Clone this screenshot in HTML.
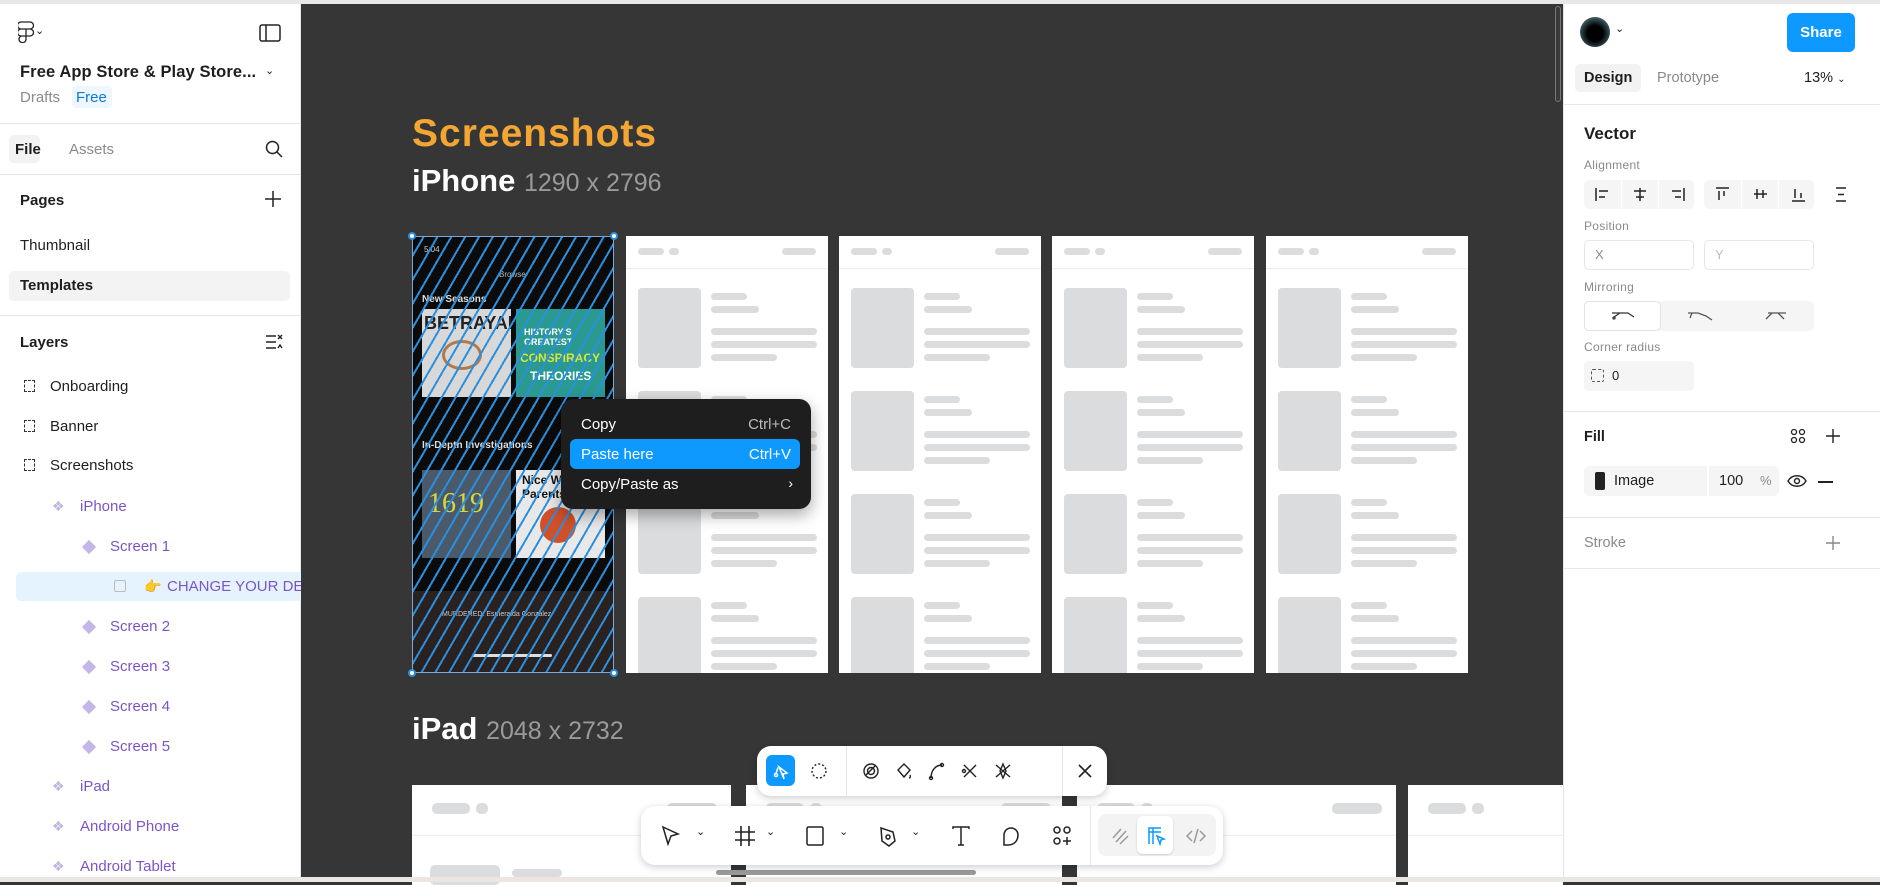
<!DOCTYPE html>
<html><head><meta charset="utf-8"><style>
*{box-sizing:border-box;margin:0;padding:0}
body{width:1880px;height:882px;overflow:hidden;font-family:"Liberation Sans",sans-serif;background:#363636;position:relative}
.abs{position:absolute}
#left{left:0;top:0;width:301px;height:882px;background:#fff;border-right:1px solid #e6e6e6}
#right{left:1563px;top:0;width:317px;height:882px;background:#fff;border-left:1px solid #e6e6e6}
.t{position:absolute;font-size:15px;color:#1e1e1e;white-space:nowrap}
.g{color:#8a8a8a}
.p{color:#7b55c7}
.hr{position:absolute;height:1px;background:#e6e6e6}
.frame{position:absolute;background:#fff;width:202px;height:437px;overflow:hidden}
.frame i{position:absolute;background:#dadcdd;border-radius:4px;display:block}
.ipad{position:absolute;background:#fff;top:785px;height:100px;overflow:hidden}
.ipad i{position:absolute;background:#dadcdd;border-radius:5px;display:block}
.ctx{left:561px;top:399px;width:250px;height:110px;background:#1e1e1e;border-radius:12px;box-shadow:0 6px 16px rgba(0,0,0,.35)}
.ctx .t{color:#fff;font-size:15px}
.bar{background:#fff;border-radius:14px;box-shadow:0 2px 8px rgba(0,0,0,.2)}
.ic{position:absolute}
.btn{position:absolute;background:#f5f5f5;border-radius:5px}
.lbl{position:absolute;font-size:12px;color:#8a8a8a;letter-spacing:.3px}
</style></head><body>
<div class="abs" style="left:0;top:0;width:1880px;height:4px;background:#e8e8e8;z-index:5"></div>
<div class="abs" style="left:0;top:877px;width:1880px;height:5px;background:#ece6e2;z-index:5"></div>

<div class="abs" style="left:412px;top:112px;font-size:39px;font-weight:bold;color:#f4a632;letter-spacing:1px">Screenshots</div>
<div class="abs" style="left:412px;top:163px;font-size:31px;font-weight:bold;color:#fff">iPhone <span style="font-weight:normal;color:#9a9a9a;font-size:25px">1290 x 2796</span></div>
<div class="abs" style="left:412px;top:711px;font-size:31px;font-weight:bold;color:#fff">iPad <span style="font-weight:normal;color:#9a9a9a;font-size:25px">2048 x 2732</span></div>

<!-- phone screenshot -->
<div class="abs" style="left:412px;top:236px;width:202px;height:437px;background:#0b0b0b;overflow:hidden">
 <div class="abs" style="left:12px;top:9px;color:#ccc;font-size:8px">5:04</div>
 <div class="abs" style="left:87px;top:34px;color:#bbb;font-size:8px">Browse</div>
 <div class="abs" style="left:10px;top:58px;color:#ddd;font-size:10px;font-weight:bold">New Seasons</div>
 <div class="abs" style="left:10px;top:73px;width:89px;height:88px;background:#d8d8d8;overflow:hidden"><div style="font:bold 18px 'Liberation Sans';color:#222;margin:4px 2px">BETRAYAL</div><div style="margin:6px 20px;width:40px;height:30px;border:3px solid #b07a50;border-radius:50%"></div></div>
 <div class="abs" style="left:104px;top:73px;width:89px;height:88px;background:#2a9a90;overflow:hidden"><div style="color:#fff;font:bold 9px 'Liberation Sans';margin:18px 8px 0">HISTORY'S GREATEST</div><div style="color:#d8e53a;font:bold 12px 'Liberation Sans';margin:4px 4px">CONSPIRACY</div><div style="color:#fff;font:bold 12px 'Liberation Sans';margin:0 14px">THEORIES</div></div>
 <div class="abs" style="left:10px;top:204px;color:#ddd;font-size:10px;font-weight:bold">In-Depth Investigations</div>
 <div class="abs" style="left:10px;top:234px;width:89px;height:88px;background:#4a5a6a"><div style="color:#d8d83a;font:28px 'Liberation Serif';margin:18px 6px">1619</div></div>
 <div class="abs" style="left:104px;top:234px;width:89px;height:88px;background:#e8e8e8;overflow:hidden"><div style="color:#111;font:bold 12px 'Liberation Sans';margin:3px 6px">Nice White Parents</div><div style="margin:6px 24px;width:36px;height:36px;background:#d0502a;border-radius:50%"></div></div>
 <div class="abs" style="left:0;top:355px;width:202px;height:82px;background:#2a2220"></div>
 <div class="abs" style="left:30px;top:375px;color:#ccc;font-size:7px">MURDERED: Esmeralda Gonzalez</div>
 <div class="abs" style="left:60px;top:418px;width:80px;height:3px;background:#ddd;border-radius:2px"></div>
 <div class="abs" style="inset:0;background:repeating-linear-gradient(-60deg,transparent 0 10px,#2b8fe0 10px 12px)"></div>
 <div class="abs" style="inset:0;border:1px solid #7aa8d8"></div>
</div>
<div class="abs" style="left:408px;top:232px;width:8px;height:8px;border-radius:50%;background:#fff;border:2px solid #2b8fe0"></div>
<div class="abs" style="left:610px;top:232px;width:8px;height:8px;border-radius:50%;background:#fff;border:2px solid #2b8fe0"></div>
<div class="abs" style="left:408px;top:669px;width:8px;height:8px;border-radius:50%;background:#fff;border:2px solid #2b8fe0"></div>
<div class="abs" style="left:610px;top:669px;width:8px;height:8px;border-radius:50%;background:#fff;border:2px solid #2b8fe0"></div>

<!-- skeleton frames -->
<div class="frame" style="left:626px;top:236px">
<i style="left:12px;top:12px;width:26px;height:7px"></i><i style="left:43px;top:12px;width:10px;height:7px"></i><i style="left:156px;top:12px;width:34px;height:7px"></i><div style="position:absolute;left:0;top:32px;width:202px;height:1px;background:#eee"></div>
<i style="left:12px;top:52px;width:63px;height:80px"></i><i style="left:85px;top:57px;width:36px;height:7px"></i><i style="left:85px;top:70px;width:48px;height:7px"></i><i style="left:85px;top:92px;width:106px;height:7px"></i><i style="left:85px;top:105px;width:106px;height:7px"></i><i style="left:85px;top:118px;width:66px;height:7px"></i>
<i style="left:12px;top:155px;width:63px;height:80px"></i><i style="left:85px;top:160px;width:36px;height:7px"></i><i style="left:85px;top:173px;width:48px;height:7px"></i><i style="left:85px;top:195px;width:106px;height:7px"></i><i style="left:85px;top:208px;width:106px;height:7px"></i><i style="left:85px;top:221px;width:66px;height:7px"></i>
<i style="left:12px;top:258px;width:63px;height:80px"></i><i style="left:85px;top:263px;width:36px;height:7px"></i><i style="left:85px;top:276px;width:48px;height:7px"></i><i style="left:85px;top:298px;width:106px;height:7px"></i><i style="left:85px;top:311px;width:106px;height:7px"></i><i style="left:85px;top:324px;width:66px;height:7px"></i>
<i style="left:12px;top:361px;width:63px;height:80px"></i><i style="left:85px;top:366px;width:36px;height:7px"></i><i style="left:85px;top:379px;width:48px;height:7px"></i><i style="left:85px;top:401px;width:106px;height:7px"></i><i style="left:85px;top:414px;width:106px;height:7px"></i><i style="left:85px;top:427px;width:66px;height:7px"></i>
</div>
<div class="frame" style="left:839px;top:236px">
<i style="left:12px;top:12px;width:26px;height:7px"></i><i style="left:43px;top:12px;width:10px;height:7px"></i><i style="left:156px;top:12px;width:34px;height:7px"></i><div style="position:absolute;left:0;top:32px;width:202px;height:1px;background:#eee"></div>
<i style="left:12px;top:52px;width:63px;height:80px"></i><i style="left:85px;top:57px;width:36px;height:7px"></i><i style="left:85px;top:70px;width:48px;height:7px"></i><i style="left:85px;top:92px;width:106px;height:7px"></i><i style="left:85px;top:105px;width:106px;height:7px"></i><i style="left:85px;top:118px;width:66px;height:7px"></i>
<i style="left:12px;top:155px;width:63px;height:80px"></i><i style="left:85px;top:160px;width:36px;height:7px"></i><i style="left:85px;top:173px;width:48px;height:7px"></i><i style="left:85px;top:195px;width:106px;height:7px"></i><i style="left:85px;top:208px;width:106px;height:7px"></i><i style="left:85px;top:221px;width:66px;height:7px"></i>
<i style="left:12px;top:258px;width:63px;height:80px"></i><i style="left:85px;top:263px;width:36px;height:7px"></i><i style="left:85px;top:276px;width:48px;height:7px"></i><i style="left:85px;top:298px;width:106px;height:7px"></i><i style="left:85px;top:311px;width:106px;height:7px"></i><i style="left:85px;top:324px;width:66px;height:7px"></i>
<i style="left:12px;top:361px;width:63px;height:80px"></i><i style="left:85px;top:366px;width:36px;height:7px"></i><i style="left:85px;top:379px;width:48px;height:7px"></i><i style="left:85px;top:401px;width:106px;height:7px"></i><i style="left:85px;top:414px;width:106px;height:7px"></i><i style="left:85px;top:427px;width:66px;height:7px"></i>
</div>
<div class="frame" style="left:1052px;top:236px">
<i style="left:12px;top:12px;width:26px;height:7px"></i><i style="left:43px;top:12px;width:10px;height:7px"></i><i style="left:156px;top:12px;width:34px;height:7px"></i><div style="position:absolute;left:0;top:32px;width:202px;height:1px;background:#eee"></div>
<i style="left:12px;top:52px;width:63px;height:80px"></i><i style="left:85px;top:57px;width:36px;height:7px"></i><i style="left:85px;top:70px;width:48px;height:7px"></i><i style="left:85px;top:92px;width:106px;height:7px"></i><i style="left:85px;top:105px;width:106px;height:7px"></i><i style="left:85px;top:118px;width:66px;height:7px"></i>
<i style="left:12px;top:155px;width:63px;height:80px"></i><i style="left:85px;top:160px;width:36px;height:7px"></i><i style="left:85px;top:173px;width:48px;height:7px"></i><i style="left:85px;top:195px;width:106px;height:7px"></i><i style="left:85px;top:208px;width:106px;height:7px"></i><i style="left:85px;top:221px;width:66px;height:7px"></i>
<i style="left:12px;top:258px;width:63px;height:80px"></i><i style="left:85px;top:263px;width:36px;height:7px"></i><i style="left:85px;top:276px;width:48px;height:7px"></i><i style="left:85px;top:298px;width:106px;height:7px"></i><i style="left:85px;top:311px;width:106px;height:7px"></i><i style="left:85px;top:324px;width:66px;height:7px"></i>
<i style="left:12px;top:361px;width:63px;height:80px"></i><i style="left:85px;top:366px;width:36px;height:7px"></i><i style="left:85px;top:379px;width:48px;height:7px"></i><i style="left:85px;top:401px;width:106px;height:7px"></i><i style="left:85px;top:414px;width:106px;height:7px"></i><i style="left:85px;top:427px;width:66px;height:7px"></i>
</div>
<div class="frame" style="left:1266px;top:236px">
<i style="left:12px;top:12px;width:26px;height:7px"></i><i style="left:43px;top:12px;width:10px;height:7px"></i><i style="left:156px;top:12px;width:34px;height:7px"></i><div style="position:absolute;left:0;top:32px;width:202px;height:1px;background:#eee"></div>
<i style="left:12px;top:52px;width:63px;height:80px"></i><i style="left:85px;top:57px;width:36px;height:7px"></i><i style="left:85px;top:70px;width:48px;height:7px"></i><i style="left:85px;top:92px;width:106px;height:7px"></i><i style="left:85px;top:105px;width:106px;height:7px"></i><i style="left:85px;top:118px;width:66px;height:7px"></i>
<i style="left:12px;top:155px;width:63px;height:80px"></i><i style="left:85px;top:160px;width:36px;height:7px"></i><i style="left:85px;top:173px;width:48px;height:7px"></i><i style="left:85px;top:195px;width:106px;height:7px"></i><i style="left:85px;top:208px;width:106px;height:7px"></i><i style="left:85px;top:221px;width:66px;height:7px"></i>
<i style="left:12px;top:258px;width:63px;height:80px"></i><i style="left:85px;top:263px;width:36px;height:7px"></i><i style="left:85px;top:276px;width:48px;height:7px"></i><i style="left:85px;top:298px;width:106px;height:7px"></i><i style="left:85px;top:311px;width:106px;height:7px"></i><i style="left:85px;top:324px;width:66px;height:7px"></i>
<i style="left:12px;top:361px;width:63px;height:80px"></i><i style="left:85px;top:366px;width:36px;height:7px"></i><i style="left:85px;top:379px;width:48px;height:7px"></i><i style="left:85px;top:401px;width:106px;height:7px"></i><i style="left:85px;top:414px;width:106px;height:7px"></i><i style="left:85px;top:427px;width:66px;height:7px"></i>
</div>

<!-- ipad frames -->
<div class="ipad" style="left:412px;width:319px"><i style="left:20px;top:18px;width:38px;height:11px"></i><i style="left:64px;top:18px;width:12px;height:11px"></i><i style="left:255px;top:18px;width:50px;height:11px"></i><div style="position:absolute;left:0;top:50px;width:319px;height:1px;background:#eee"></div><i style="left:18px;top:80px;width:70px;height:20px"></i><i style="left:100px;top:84px;width:50px;height:8px"></i></div>
<div class="ipad" style="left:746px;width:316px"><i style="left:20px;top:18px;width:38px;height:11px"></i><i style="left:64px;top:18px;width:12px;height:11px"></i><i style="left:255px;top:18px;width:50px;height:11px"></i><div style="position:absolute;left:0;top:50px;width:316px;height:1px;background:#eee"></div></div>
<div class="ipad" style="left:1077px;width:319px"><i style="left:20px;top:18px;width:38px;height:11px"></i><i style="left:64px;top:18px;width:12px;height:11px"></i><i style="left:255px;top:18px;width:50px;height:11px"></i><div style="position:absolute;left:0;top:50px;width:319px;height:1px;background:#eee"></div></div>
<div class="ipad" style="left:1408px;width:155px"><i style="left:20px;top:18px;width:38px;height:11px"></i><i style="left:64px;top:18px;width:12px;height:11px"></i><div style="position:absolute;left:0;top:50px;width:155px;height:1px;background:#eee"></div></div>
<div class="abs" style="left:716px;top:870px;width:260px;height:5px;border-radius:3px;background:#9a9a9a"></div>
<div class="abs" style="left:1555px;top:6px;width:6px;height:96px;border-radius:3px;border:1px solid #777;background:#3a3a3a"></div>

<!-- context menu -->
<div class="abs ctx">
 <div class="t" style="left:20px;top:17px">Copy</div><div class="t" style="right:20px;top:17px;color:#bbb">Ctrl+C</div>
 <div class="abs" style="left:9px;top:40px;width:230px;height:30px;background:#0d99ff;border-radius:6px"></div>
 <div class="t" style="left:20px;top:47px">Paste here</div><div class="t" style="right:20px;top:47px">Ctrl+V</div>
 <div class="t" style="left:20px;top:77px">Copy/Paste as</div><div class="t" style="right:18px;top:76px;font-size:14px">›</div>
</div>

<!-- floating vector toolbar -->
<div class="abs bar" style="left:757px;top:746px;width:350px;height:50px">
 <div class="abs" style="left:9px;top:9px;width:29px;height:31px;background:#0d99ff;border-radius:6px"></div>
 <svg class="ic" style="left:14px;top:15px" width="20" height="20" viewBox="0 0 20 20" fill="none" stroke="#fff" stroke-width="1.5"><path d="M8 6l8 6-4 1 1 5-5-12z"/><circle cx="5" cy="14" r="1.5"/><path d="M5 12.5l2-6"/></svg>
 <svg class="ic" style="left:52px;top:15px" width="20" height="20" viewBox="0 0 20 20" fill="none" stroke="#222" stroke-width="1.4" stroke-dasharray="2 2"><circle cx="10" cy="10" r="7"/></svg>
 <div class="abs" style="left:89px;top:0;width:1px;height:50px;background:#e6e6e6"></div>
 <svg class="ic" style="left:104px;top:15px" width="20" height="20" viewBox="0 0 20 20" fill="none" stroke="#222" stroke-width="1.4"><circle cx="10" cy="10" r="7"/><circle cx="10" cy="10" r="3.5"/><path d="M5 14l9-9"/></svg>
 <svg class="ic" style="left:137px;top:15px" width="20" height="20" viewBox="0 0 20 20" fill="none" stroke="#222" stroke-width="1.4"><path d="M4 9l6-6 6 6-6 7z"/><path d="M16 14c1 2 0 3-1 3"/></svg>
 <svg class="ic" style="left:170px;top:15px" width="20" height="20" viewBox="0 0 20 20" fill="none" stroke="#222" stroke-width="1.4"><path d="M4 17C4 9 9 4 15 4"/><circle cx="4" cy="17" r="1.5"/><circle cx="15" cy="4" r="1.5"/></svg>
 <svg class="ic" style="left:203px;top:15px" width="20" height="20" viewBox="0 0 20 20" fill="none" stroke="#222" stroke-width="1.4"><path d="M4 4l12 12M16 4L4 16"/><circle cx="4" cy="10" r="1.5"/></svg>
 <svg class="ic" style="left:236px;top:15px" width="20" height="20" viewBox="0 0 20 20" fill="none" stroke="#222" stroke-width="1.4"><path d="M3 4l14 12M17 4L3 16M10 3l3 7-3 7-3-7z"/></svg>
 <div class="abs" style="left:305px;top:0;width:1px;height:50px;background:#e6e6e6"></div>
 <svg class="ic" style="left:319px;top:16px" width="18" height="18" viewBox="0 0 18 18" stroke="#222" stroke-width="1.6"><path d="M3 3l12 12M15 3L3 15"/></svg>
</div>

<!-- main toolbar -->
<div class="abs bar" style="left:641px;top:806px;width:582px;height:59px">
 <svg class="ic" style="left:18px;top:18px" width="24" height="24" viewBox="0 0 24 24" fill="none" stroke="#222" stroke-width="1.5"><path d="M4 3l15 7-7 2-3 8z"/></svg>
 <div class="t" style="left:55px;top:19px;font-size:11px">⌄</div>
 <svg class="ic" style="left:92px;top:18px" width="24" height="24" viewBox="0 0 24 24" fill="none" stroke="#222" stroke-width="1.6"><path d="M8 2v20M16 2v20M2 8h20M2 16h20"/></svg>
 <div class="t" style="left:125px;top:19px;font-size:11px">⌄</div>
 <svg class="ic" style="left:162px;top:18px" width="24" height="24" viewBox="0 0 24 24" fill="none" stroke="#222" stroke-width="1.5"><rect x="4" y="3" width="16" height="18" rx="1.5"/></svg>
 <div class="t" style="left:198px;top:19px;font-size:11px">⌄</div>
 <svg class="ic" style="left:235px;top:18px" width="24" height="24" viewBox="0 0 24 24" fill="none" stroke="#222" stroke-width="1.5"><path d="M5 4l12 4 2 9-6 5-7-5z"/><circle cx="12" cy="13" r="2"/></svg>
 <div class="t" style="left:270px;top:19px;font-size:11px">⌄</div>
 <svg class="ic" style="left:308px;top:18px" width="24" height="24" viewBox="0 0 24 24" fill="none" stroke="#222" stroke-width="1.5"><path d="M4 5V3h16v2M12 3v18M9 21h6"/></svg>
 <svg class="ic" style="left:358px;top:18px" width="24" height="24" viewBox="0 0 24 24" fill="none" stroke="#222" stroke-width="1.5"><path d="M5 21V11a7 7 0 1114 0c0 6-4 10-10 10z"/></svg>
 <svg class="ic" style="left:409px;top:18px" width="24" height="24" viewBox="0 0 24 24" fill="none" stroke="#222" stroke-width="1.5"><circle cx="7" cy="6" r="3"/><circle cx="17" cy="6" r="3"/><circle cx="7" cy="17" r="3"/><path d="M17 13v8M13 17h8"/></svg>
 <div class="abs" style="left:449px;top:0;width:1px;height:59px;background:#e6e6e6"></div>
 <div class="abs" style="left:457px;top:8px;width:118px;height:42px;background:#f3f3f3;border-radius:8px"></div>
 <svg class="ic" style="left:468px;top:18px" width="24" height="24" viewBox="0 0 24 24" fill="none" stroke="#999" stroke-width="1.5"><path d="M4 14l8-9M7 18l10-11M11 20l8-8"/></svg>
 <div class="abs" style="left:496px;top:10px;width:36px;height:38px;background:#fff;border-radius:6px;box-shadow:0 1px 2px rgba(0,0,0,.15)"></div>
 <svg class="ic" style="left:503px;top:18px" width="24" height="24" viewBox="0 0 24 24" fill="none" stroke="#0d99ff" stroke-width="1.5"><path d="M5 20V4h12M5 8h12M9 4v16"/><path d="M13 12l7 3-3 1-1 4z"/></svg>
 <svg class="ic" style="left:543px;top:18px" width="24" height="24" viewBox="0 0 24 24" fill="none" stroke="#999" stroke-width="1.5"><path d="M8 7l-5 5 5 5M16 7l5 5-5 5M14 5l-4 14"/></svg>
</div>

<div class="abs" style="left:1793px;top:807px;width:40px;height:40px;border-radius:50%;background:#1e1e1e;color:#fff;font-size:20px;text-align:center;line-height:40px">?</div>

<!-- LEFT PANEL -->
<div id="left" class="abs">
 <svg class="ic" style="left:18px;top:21px" width="16" height="22" viewBox="0 0 16 22" fill="none" stroke="#222" stroke-width="1.3"><path d="M3 1h9a3.5 3.5 0 010 7H3a3.5 3.5 0 010-7zM3 8h5v7H3a3.5 3.5 0 010-7zM8 8h4a3.5 3.5 0 010 7H8zM3 15h5v3.5A3.5 3.5 0 113 15z"/></svg>
 <div class="t" style="left:35px;top:24px;font-size:11px">⌄</div>
 <svg class="ic" style="left:259px;top:24px" width="22" height="18" viewBox="0 0 22 18" fill="none" stroke="#222" stroke-width="1.5"><rect x="1" y="1" width="20" height="16" rx="2"/><path d="M7 1v16"/></svg>
 <div class="t" style="left:20px;top:63px;font-size:16.5px;font-weight:bold;color:#1e1e1e;letter-spacing:.1px">Free App Store &amp; Play Store...</div>
 <div class="t" style="left:265px;top:64px;font-size:11px">⌄</div>
 <div class="t g" style="left:20px;top:89px">Drafts</div>
 <div class="abs" style="left:72px;top:86px;width:40px;height:22px;border-radius:4px;background:#eef6ff"></div>
 <div class="t" style="left:76px;top:89px;color:#0d7ad6">Free</div>
 <div class="hr" style="left:0;top:123px;width:301px"></div>
 <div class="abs" style="left:9px;top:135px;width:31px;height:28px;background:#f2f2f2;border-radius:5px"></div>
 <div class="t" style="left:15px;top:141px;font-weight:bold">File</div>
 <div class="t g" style="left:69px;top:141px">Assets</div>
 <svg class="ic" style="left:264px;top:139px" width="20" height="20" viewBox="0 0 20 20" fill="none" stroke="#222" stroke-width="1.5"><circle cx="8.5" cy="8.5" r="6"/><path d="M13 13l5 5"/></svg>
 <div class="hr" style="left:0;top:174px;width:301px"></div>
 <div class="t" style="left:20px;top:192px;font-weight:bold">Pages</div>
 <svg class="ic" style="left:265px;top:191px" width="16" height="16" viewBox="0 0 16 16" stroke="#222" stroke-width="1.5"><path d="M8 0v16M0 8h16"/></svg>
 <div class="t" style="left:20px;top:237px">Thumbnail</div>
 <div class="abs" style="left:9px;top:271px;width:281px;height:30px;background:#f3f3f3;border-radius:5px"></div>
 <div class="t" style="left:20px;top:277px;font-weight:bold">Templates</div>
 <div class="hr" style="left:0;top:315px;width:301px"></div>
 <div class="t" style="left:20px;top:334px;font-weight:bold">Layers</div>
 <svg class="ic" style="left:265px;top:334px" width="18" height="16" viewBox="0 0 18 16" fill="none" stroke="#222" stroke-width="1.4"><path d="M1 2h10M1 8h10M1 14h10M13 1l4 4M17 1l-4 4M13 14l2-3 2 3"/></svg>

 <div class="abs" style="left:24px;top:380px;width:11px;height:12px;border:1.5px dashed #333"></div>
 <div class="t" style="left:50px;top:378px">Onboarding</div>
 <div class="abs" style="left:24px;top:420px;width:11px;height:12px;border:1.5px dashed #333"></div>
 <div class="t" style="left:50px;top:418px">Banner</div>
 <div class="abs" style="left:24px;top:459px;width:11px;height:12px;border:1.5px dashed #333"></div>
 <div class="t" style="left:50px;top:457px">Screenshots</div>

 <div class="t" style="left:52px;top:498px;color:#c0b4dc;font-size:14px">❖</div>
 <div class="t p" style="left:80px;top:498px">iPhone</div>
 <div class="abs" style="left:84px;top:542px;width:10px;height:10px;background:#c4b6e6;transform:rotate(45deg)"></div>
 <div class="t p" style="left:110px;top:538px">Screen 1</div>
 <div class="abs" style="left:16px;top:572px;width:285px;height:29px;background:#e5f3ff;border-radius:6px 0 0 6px"></div>
 <div class="abs" style="left:114px;top:580px;width:12px;height:12px;border:1px solid #bbb;border-radius:2px"></div>
 <div class="t" style="left:144px;top:578px;font-size:14px">👉</div>
 <div class="t p" style="left:167px;top:578px;width:134px;overflow:hidden">CHANGE YOUR DESCRIPTION</div>
 <div class="abs" style="left:84px;top:622px;width:10px;height:10px;background:#c4b6e6;transform:rotate(45deg)"></div>
 <div class="t p" style="left:110px;top:618px">Screen 2</div>
 <div class="abs" style="left:84px;top:662px;width:10px;height:10px;background:#c4b6e6;transform:rotate(45deg)"></div>
 <div class="t p" style="left:110px;top:658px">Screen 3</div>
 <div class="abs" style="left:84px;top:702px;width:10px;height:10px;background:#c4b6e6;transform:rotate(45deg)"></div>
 <div class="t p" style="left:110px;top:698px">Screen 4</div>
 <div class="abs" style="left:84px;top:742px;width:10px;height:10px;background:#c4b6e6;transform:rotate(45deg)"></div>
 <div class="t p" style="left:110px;top:738px">Screen 5</div>
 <div class="t" style="left:52px;top:778px;color:#c0b4dc;font-size:14px">❖</div>
 <div class="t p" style="left:80px;top:778px">iPad</div>
 <div class="t" style="left:52px;top:818px;color:#c0b4dc;font-size:14px">❖</div>
 <div class="t p" style="left:80px;top:818px">Android Phone</div>
 <div class="t" style="left:52px;top:858px;color:#c0b4dc;font-size:14px">❖</div>
 <div class="t p" style="left:80px;top:858px">Android Tablet</div>
</div>

<!-- RIGHT PANEL -->
<div id="right" class="abs">
 <div class="abs" style="left:16px;top:17px;width:30px;height:30px;border-radius:50%;background:radial-gradient(circle at 50% 55%,#000 35%,#3a5860 70%,#6a8088)"></div>
 <div class="t" style="left:51px;top:22px;font-size:11px">⌄</div>
 <div class="abs" style="left:223px;top:13px;width:68px;height:39px;background:#0d99ff;border-radius:6px;color:#fff;font-size:15px;font-weight:bold;text-align:center;line-height:39px">Share</div>
 <div class="abs" style="left:11px;top:64px;width:66px;height:28px;background:#f2f2f2;border-radius:5px"></div>
 <div class="t" style="left:20px;top:70px;font-weight:bold;font-size:14.5px">Design</div>
 <div class="t g" style="left:93px;top:70px;font-size:14.5px">Prototype</div>
 <div class="t" style="left:240px;top:70px;font-size:14.5px">13% <span style="font-size:10px">⌄</span></div>
 <div class="hr" style="left:0;top:104px;width:317px"></div>
 <div class="t" style="left:20px;top:124px;font-size:17px;font-weight:bold">Vector</div>
 <div class="lbl" style="left:20px;top:158px">Alignment</div>
 <div class="btn" style="left:20px;top:180px;width:110px;height:29px"></div>
 <div class="btn" style="left:140px;top:180px;width:110px;height:29px"></div>
 <div class="abs" style="left:57px;top:180px;width:1px;height:29px;background:#fff"></div>
 <div class="abs" style="left:94px;top:180px;width:1px;height:29px;background:#fff"></div>
 <div class="abs" style="left:177px;top:180px;width:1px;height:29px;background:#fff"></div>
 <div class="abs" style="left:214px;top:180px;width:1px;height:29px;background:#fff"></div>
 <svg class="ic" style="left:20px;top:180px" width="290" height="29" viewBox="0 0 290 29" fill="none" stroke="#222" stroke-width="1.5">
  <path d="M12 8v13M15 11h9M15 17h6"/>
  <path d="M56 8v13M50 11h12M52 17h8"/>
  <path d="M100 8v13M88 11h9M91 17h6"/>
  <path d="M132 8h13M135 11v9M140 11v5"/>
  <path d="M170 14h13M173 9v10M179 10v8"/>
  <path d="M208 21h13M211 9v9M217 13v5"/>
  <path d="M252 8h10M252 21h10M254 14.5h6"/>
 </svg>
 <div class="lbl" style="left:20px;top:219px">Position</div>
 <div class="abs" style="left:20px;top:240px;width:110px;height:30px;border:1px solid #e6e6e6;border-radius:5px"></div>
 <div class="t g" style="left:31px;top:247px;font-size:13px">X</div>
 <div class="abs" style="left:140px;top:240px;width:110px;height:30px;border:1px solid #e6e6e6;border-radius:5px"></div>
 <div class="t" style="left:151px;top:247px;font-size:13px;color:#bbb">Y</div>
 <div class="lbl" style="left:20px;top:280px">Mirroring</div>
 <div class="btn" style="left:20px;top:301px;width:230px;height:30px"></div>
 <div class="abs" style="left:20px;top:301px;width:77px;height:30px;background:#fff;border:1px solid #e2e2e2;border-radius:5px"></div>
 <svg class="ic" style="left:20px;top:301px" width="230" height="30" viewBox="0 0 230 30" fill="none" stroke="#333" stroke-width="1.3"><path d="M30 16l6-4 8 0 6 4M28 12h10"/><circle cx="30" cy="17" r="1"/><path d="M106 17l2-5h6l8 3 6 4M104 12h8" stroke="#555"/><path d="M182 18l6-6h6l6 6M184 12h18" stroke="#555"/></svg>
 <div class="lbl" style="left:20px;top:340px">Corner radius</div>
 <div class="btn" style="left:20px;top:361px;width:110px;height:30px"></div>
 <div class="abs" style="left:27px;top:369px;width:13px;height:13px;border:1.5px dashed #555;border-radius:2px"></div>
 <div class="t" style="left:48px;top:368px;font-size:13px">0</div>
 <div class="hr" style="left:0;top:411px;width:317px"></div>
 <div class="t" style="left:20px;top:429px;font-weight:bold;font-size:14.5px">Fill</div>
 <svg class="ic" style="left:226px;top:428px" width="16" height="16" viewBox="0 0 16 16" fill="none" stroke="#222" stroke-width="1.3"><circle cx="4" cy="4" r="2.5"/><circle cx="12" cy="4" r="2.5"/><circle cx="4" cy="12" r="2.5"/><circle cx="12" cy="12" r="2.5"/></svg>
 <svg class="ic" style="left:261px;top:428px" width="16" height="16" viewBox="0 0 16 16" stroke="#222" stroke-width="1.4"><path d="M8 1v14M1 8h14"/></svg>
 <div class="btn" style="left:20px;top:466px;width:195px;height:30px"></div>
 <div class="abs" style="left:143px;top:466px;width:2px;height:30px;background:#fff"></div>
 <div class="abs" style="left:31px;top:472px;width:10px;height:18px;background:#222;border-radius:2px"></div>
 <div class="t" style="left:50px;top:473px;font-size:14.5px">Image</div>
 <div class="t" style="left:155px;top:473px;font-size:14.5px">100</div>
 <div class="t g" style="left:196px;top:473px;font-size:13px">%</div>
 <svg class="ic" style="left:223px;top:473px" width="20" height="16" viewBox="0 0 20 16" fill="none" stroke="#222" stroke-width="1.4"><path d="M1 8c4-7 14-7 18 0-4 7-14 7-18 0z"/><circle cx="10" cy="8" r="2.5"/></svg>
 <div class="abs" style="left:254px;top:481px;width:15px;height:1.5px;background:#222"></div>
 <div class="hr" style="left:0;top:517px;width:317px"></div>
 <div class="t g" style="left:20px;top:535px;font-size:14.5px">Stroke</div>
 <svg class="ic" style="left:261px;top:535px" width="16" height="16" viewBox="0 0 16 16" stroke="#888" stroke-width="1.4"><path d="M8 1v14M1 8h14"/></svg>
 <div class="hr" style="left:0;top:568px;width:317px"></div>
</div>
</body></html>
